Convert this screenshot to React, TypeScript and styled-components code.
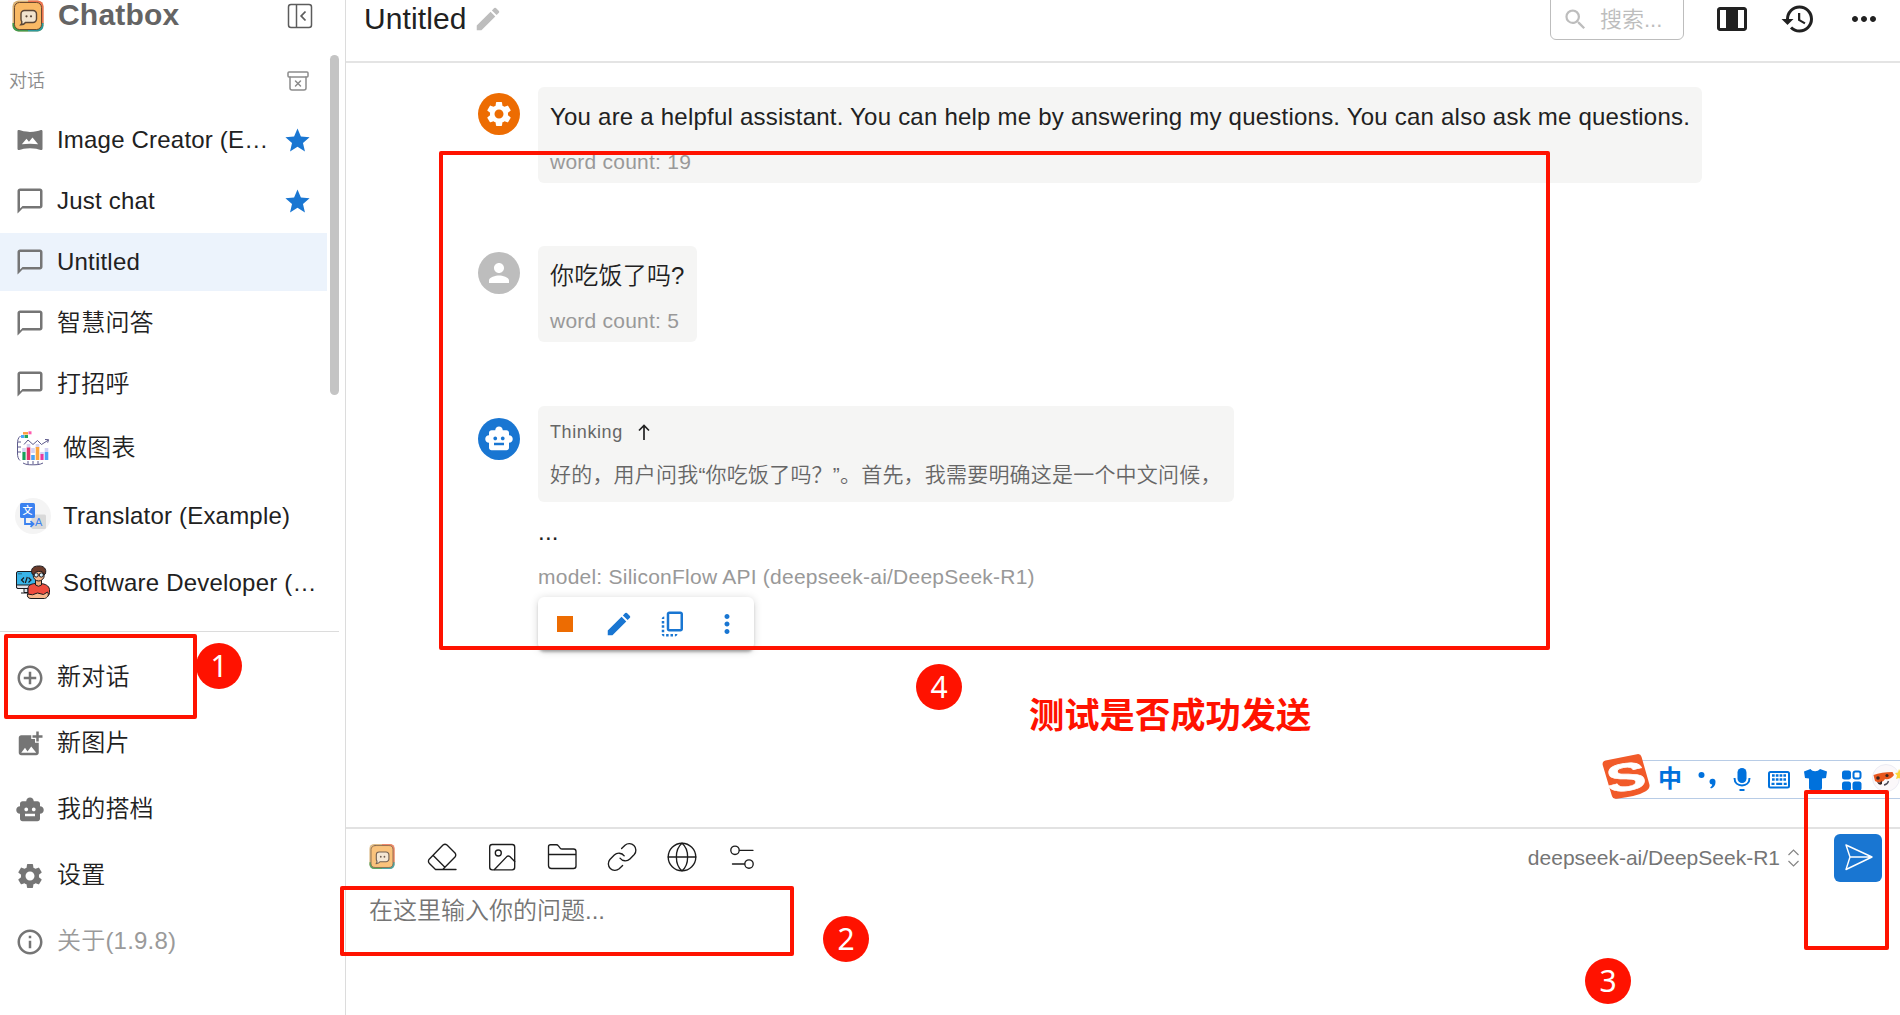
import type { ReactNode } from "react";
import styled, { createGlobalStyle } from "styled-components";
import { ArchiveX } from "lucide-react";
import {
  MdAddCircleOutline,
  MdAddPhotoAlternate,
  MdChatBubbleOutline,
  MdCopyAll,
  MdEdit,
  MdHistory,
  MdInfoOutline,
  MdMoreHoriz,
  MdMoreVert,
  MdPerson,
  MdSearch,
  MdSettings,
  MdSmartToy,
  MdStar,
  MdStop,
  MdVrpano,
} from "react-icons/md";

const GlobalStyle = createGlobalStyle`
  * {
    box-sizing: border-box;
  }

  body {
    margin: 0;
    overflow: hidden;
    background: #ffffff;
    color: #212121;
    font-family: "Liberation Sans", "Noto Sans CJK SC", sans-serif;
    font-size: 24px;
    font-weight: 350;
  }

  svg {
    display: block;
    flex-shrink: 0;
  }
`;

const Page = styled.div`
  position: relative;
  display: flex;
  width: 100vw;
  height: 100vh;
  overflow: hidden;
`;

const Sidebar = styled.aside`
  position: relative;
  display: flex;
  flex-direction: column;
  width: 346px;
  flex-shrink: 0;
  border-right: 1px solid #dcdcdc;
`;

const Brand = styled.div`
  display: flex;
  align-items: center;
  height: 56px;
  padding: 0 32px 24px 12px;
`;

const BrandName = styled.span`
  flex: 1;
  margin-left: 14px;
  margin-top: -2px;
  color: #646464;
  font-size: 30px;
  font-weight: 700;
  letter-spacing: 0.2px;
  line-height: 34px;
`;

const ListHeader = styled.div`
  display: flex;
  align-items: center;
  justify-content: space-between;
  height: 50px;
  padding: 0 35px 0 9px;
  color: #8c8c8c;
  font-size: 18px;

  span {
    margin-top: -4px;
  }
`;

const SessionList = styled.div`
  display: flex;
  flex-direction: column;
  gap: 3px;
  height: 525px;
  padding-top: 5px;
`;

const Session = styled.div<{ $active?: boolean; $avatar?: boolean }>`
  display: flex;
  align-items: center;
  width: 327px;
  height: ${({ $avatar }) => ($avatar ? 64.5 : 58)}px;
  padding: 0 ${({ $avatar }) => ($avatar ? 6 : 15)}px 0 15px;
  background: ${({ $active }) => ($active ? "#ecf3fc" : "transparent")};
  color: #757575;
`;

const SessionName = styled.span`
  flex: 1;
  min-width: 0;
  margin-left: 12px;
  overflow: hidden;
  color: #212121;
  letter-spacing: 0.2px;
  line-height: 36px;
  text-overflow: ellipsis;
  white-space: nowrap;
`;

const StarSlot = styled.span`
  margin-left: 12px;
  color: #1976d2;
`;

const ScrollThumb = styled.div`
  position: absolute;
  top: 55px;
  left: 330px;
  width: 9px;
  height: 340px;
  border-radius: 5px;
  background: #c4c4c4;
`;

const Menu = styled.nav`
  width: 339px;
  padding-top: 13px;
  border-top: 1px solid #dcdcdc;
`;

const MenuItem = styled.div<{ $muted?: boolean }>`
  display: flex;
  align-items: center;
  gap: 12px;
  height: 66px;
  padding-left: 15px;
  color: ${({ $muted }) => ($muted ? "#9a9a9a" : "#212121")};
  letter-spacing: 0.2px;

  span {
    line-height: 36px;
    margin-top: -2px;
  }

  svg {
    color: #757575;
  }
`;

const Main = styled.main`
  display: flex;
  flex: 1;
  flex-direction: column;
  min-width: 0;
`;

const Header = styled.header`
  display: flex;
  align-items: flex-start;
  height: 63px;
  padding: 0 18px 0 19px;
  border-bottom: 2px solid #e4e4e4;
`;

const Title = styled.h1`
  margin: 1px 6px 0 -1px;
  font-size: 30px;
  font-weight: 400;
  letter-spacing: 0.1px;
  line-height: 36px;
`;

const TitleEdit = styled.span`
  flex: 1;
  padding-top: 4px;
  color: #bdbdbd;
`;

const SearchBox = styled.div`
  display: flex;
  align-items: center;
  gap: 11px;
  width: 134px;
  height: 46px;
  margin-top: -6px;
  margin-right: 30px;
  padding: 5px 0 0 11px;
  border: 1px solid #bdbdbd;
  border-radius: 6px;
  color: #bdbdbd;
  font-size: 22px;
  white-space: nowrap;

  span {
    margin-top: -5px;
  }
`;

const HeaderIcons = styled.div`
  display: flex;
  gap: 30px;
  padding-top: 1px;
`;

const Conversation = styled.section`
  display: flex;
  flex: 1;
  flex-direction: column;
  align-items: flex-start;
  gap: 63px;
  padding: 24px 0 0 132px;
`;

const Message = styled.article`
  display: flex;
  gap: 18px;

  &:last-child {
    margin-top: 1px;
  }
`;

const Avatar = styled.div<{ $color: string; $offset?: number }>`
  display: flex;
  align-items: center;
  justify-content: center;
  width: 42px;
  height: 42px;
  margin-top: ${({ $offset }) => $offset ?? 6}px;
  border-radius: 50%;
  background: ${({ $color }) => $color};
  color: #ffffff;
`;

const Bubble = styled.div`
  height: 96px;
  padding: 12px 12px 6px;
  border-radius: 6px;
  background: #f5f5f4;
  white-space: nowrap;
`;

const MessageText = styled.p`
  margin: 0;
  letter-spacing: 0.225px;
  line-height: 36px;
`;

const WordCount = styled.p`
  margin: 12px 0 0;
  color: #999999;
  font-size: 21px;
  letter-spacing: 0.235px;
  line-height: 30px;
`;

const ThinkingBubble = styled(Bubble)`
  width: 696px;
  padding-top: 11px;
`;

const ThinkingTitle = styled.div`
  display: flex;
  align-items: center;
  gap: 11px;
  height: 30px;
  color: #666666;
  font-size: 18px;
  letter-spacing: 0.6px;
`;

const ThinkingText = styled.p`
  margin: 13px 0 0;
  color: #666666;
  font-size: 21px;
  letter-spacing: 0.2px;
  line-height: 30px;
`;

const ModelName = styled(WordCount)`
  margin: 12px 0 5px;
`;

const Pending = styled(MessageText)`
  margin-top: 12px;
`;

const Actions = styled.div`
  display: flex;
  width: 216px;
  height: 53px;
  border-radius: 6px;
  background: #ffffff;
  box-shadow: 0 3px 3px -1px rgba(0, 0, 0, 0.3), 0 1px 8px rgba(0, 0, 0, 0.16);
`;

const Action = styled.span<{ $color?: string }>`
  display: flex;
  align-items: center;
  justify-content: center;
  width: 54px;
  color: ${({ $color }) => $color ?? "#1976d2"};
`;

const Composer = styled.footer`
  height: 188px;
  padding: 5px 18px 0 21px;
  border-top: 2px solid #e2e2e2;
`;

const ComposerBar = styled.div`
  display: flex;
  align-items: center;
  height: 48px;
`;

const Tools = styled.div`
  display: flex;
  flex: 1;
  gap: 30px;
  padding-bottom: 3px;
  color: #1c1c1c;
`;

const ModelSelect = styled.div`
  display: flex;
  align-items: center;
  gap: 7px;
  margin-right: 34px;
  color: #757575;
  font-size: 21px;
`;

const SendButton = styled.button`
  display: flex;
  align-items: center;
  justify-content: center;
  width: 48px;
  height: 48px;
  padding: 0;
  border: 0;
  border-radius: 6px;
  background: #1976d2;
`;

const Placeholder = styled.div`
  margin-top: 11px;
  padding-left: 2px;
  color: #757575;
  font-size: 24px;
  line-height: 36px;
`;

const ImeBar = styled.div`
  position: absolute;
  top: 760px;
  left: 1615px;
  display: flex;
  align-items: center;
  width: 285px;
  height: 39px;
  padding: 0 0 2px 43px;
  border-top: 1px solid #b8cce6;
  border-bottom: 1px solid #b8cce6;
  background: #ffffff;
  color: #0071dc;
`;

const ImeLogo = styled.div`
  position: absolute;
  top: -8px;
  left: -14px;
`;

const ImeMode = styled.span`
  width: 25px;
  font-size: 24px;
  font-weight: 700;
  line-height: 36px;
`;

const Frame = styled.div<{ $x: number; $y: number; $w: number; $h: number }>`
  position: absolute;
  top: ${({ $y }) => $y}px;
  left: ${({ $x }) => $x}px;
  width: ${({ $w }) => $w}px;
  height: ${({ $h }) => $h}px;
  border: 4px solid #ff1200;
  border-radius: 2px;
`;

const Step = styled.div<{ $x: number; $y: number }>`
  position: absolute;
  top: ${({ $y }) => $y}px;
  left: ${({ $x }) => $x}px;
  display: flex;
  align-items: center;
  justify-content: center;
  width: 46px;
  height: 46px;
  border-radius: 50%;
  background: #ff1200;
  color: #ffffff;
  font-family: "Noto Sans", sans-serif;
  font-size: 30px;
  font-weight: 400;
  line-height: 46px;
`;

const Note = styled.div`
  position: absolute;
  top: 687px;
  left: 1029px;
  color: #ff1200;
  font-family: "Noto Sans CJK SC", sans-serif;
  font-size: 35.3px;
  font-weight: 700;
  line-height: 52px;
  white-space: nowrap;
`;

function AppLogo({ size, faded }: { size: number; faded?: boolean }) {
  return (
    <svg width={size} height={size} viewBox="0 0 32 32" opacity={faded ? 0.85 : 1}>
      <rect x="0.5" y="0.5" width="31" height="31" rx="6" fill="#d8b074" />
      <path d="M16 .5h9.500a6 6 0 0 1 6 6V24H16z" fill="#ec7351" />
      <path d="M.5 23H16v8.500H6.500a6 6 0 0 1-6-6z" fill="#3f9a4f" />
      <path d="M16 23h15.500v2.500a6 6 0 0 1-6 6H16z" fill="#2b9a9c" />
      <rect x="2.500" y="2.500" width="27" height="27" rx="5" fill="#f9b965" stroke="#6b4a2e" strokeWidth="1" />
      <path
        d="M12.500 10.500h8.500a3.500 3.500 0 0 1 3.500 3.500v5a3.500 3.500 0 0 1-3.500 3.500h-7.500c-1 1.500-2.500 2.300-4.700 2.300 1-1 1.200-1.800 1-3.200-.7-.8-.8-1.600-.8-2.600v-5a3.500 3.500 0 0 1 3.500-3.500z"
        fill="#f2e3cd"
        stroke="#5b4636"
        strokeWidth="1.400"
      />
      <circle cx="14.500" cy="16.300" r="1.100" fill="#5b4636" />
      <circle cx="19" cy="16.300" r="1.100" fill="#5b4636" />
    </svg>
  );
}

function CollapseIcon() {
  return (
    <svg width="26" height="26" viewBox="0 0 26 26" fill="none" stroke="#5c5c5c" strokeWidth="1.500">
      <rect x="1.500" y="1.500" width="23" height="23" rx="2.500" />
      <path d="M9.500 1.500v23" />
      <path d="M18.500 8.500 14.200 13l4.300 4.500" strokeWidth="1.800" />
    </svg>
  );
}

function ChartAvatar() {
  return (
    <svg width="36" height="36" viewBox="0 0 36 36" fill="none">
      <path d="M5.500 6C3 8 2.500 10 2.500 14v9c0 4 .8 6 2.500 7.500M3 12h3M3 17h3M3 22h3" stroke="#5d5a8c" />
      <path d="M8 33c3 1.600 5 1.800 9 1.800s8 0 11-1.800M13 31v3M18 31v3M23 31v3" stroke="#5d5a8c" />
      <path d="M9 14.500 13 10l5 4.500 4.500-4 4 4 7-4.500M30 9.500l3.500.2-.8 3" stroke="#5d5a8c" />
      <path d="M6 6.500h3" stroke="#4aa8ff" strokeWidth="3" />
      <path d="M9.500 6.500H13" stroke="#22a45d" strokeWidth="3" />
      <path d="M8 3.300h5" stroke="#ff9f40" strokeWidth="2.500" />
      <path d="M13.500 2.800h3" stroke="#ff5bae" strokeWidth="3" />
      <path d="M9 18v4M13.500 14v4M18 18v5M22.500 14v4M27 22v2.500M31.500 18v4" stroke="#d4d3f3" strokeWidth="3.600" />
      <path d="M9 22v8" stroke="#17a05a" strokeWidth="3.200" />
      <path d="M13.500 17.500V30" stroke="#e2336b" strokeWidth="3.600" />
      <path d="M18 25v5M31.500 22v8" stroke="#4ba3f5" strokeWidth="3.600" />
      <path d="M22.500 17v13" stroke="#fba53e" strokeWidth="3.600" />
      <path d="M27 24v6" stroke="#e83aa0" strokeWidth="3.200" />
    </svg>
  );
}

function TranslatorAvatar() {
  return (
    <svg width="36" height="36" viewBox="0 0 36 36">
      <circle cx="18" cy="18" r="18" fill="#f4f4f4" />
      <rect x="16.500" y="16.500" width="14.500" height="14.500" rx="1.500" fill="#d9d9d9" />
      <rect x="5" y="5" width="15" height="15" rx="1.500" fill="#3b82f0" />
      <path d="M10 20v6h8m-2.500-2.800L18.500 26l-3 2.800" fill="none" stroke="#3b82f0" strokeWidth="1.800" />
      <text x="7.500" y="16" fontSize="10" fontWeight="500" fill="#ffffff" fontFamily="Noto Sans CJK SC">文</text>
      <text x="20" y="28" fontSize="11" fontWeight="400" fill="#3b82f0" fontFamily="Liberation Sans">A</text>
    </svg>
  );
}

function DeveloperAvatar() {
  return (
    <svg width="36" height="36" viewBox="0 0 36 36" stroke="#1b1a1e" strokeWidth="1">
      <rect x="1.500" y="6.500" width="19" height="17" rx="1.500" fill="#39b4e8" />
      <path d="M1.500 20h14v3.500H3a1.500 1.500 0 0 1-1.500-1.500zM9 23.500h4v4H9zM6 28h8" fill="#dfe3ea" />
      <path d="M3.500 8.800h4" strokeDasharray="1 1" />
      <path d="M9 12.500 6.500 15 9 17.500M13.500 12.500 16 15l-2.500 2.500M12.300 12l-2 6" fill="none" strokeWidth="1.200" />
      <path d="M13 32v-8c0-4 3-5 7-5.500h6c4 .5 8 2 8.500 6v3c0 3-2 4.500-5 4.500z" fill="#ef4d3f" />
      <path d="M20.500 14.500h6V20q-3 2.500-6 0z" fill="#f2a97c" />
      <circle cx="23.700" cy="10.500" r="5.500" fill="#f7b78c" />
      <path d="M17.200 9c-2-5 1-8 6-8 5.500-.5 9 3 7 8l-1.500 1c0-3-2-4-5-3.500-3 0-4.300 1-5 3.500z" fill="#6b3b2a" />
      <circle cx="21.200" cy="10" r="2.100" fill="#d9f1fb" />
      <circle cx="26.300" cy="10" r="2.100" fill="#d9f1fb" />
      <path d="M12.500 29q5 2 10-1l6 1.500 4-2.500c2 3 0 6-3 6.500H16c-3 0-4-2-3.500-4.500z" fill="#f7b78c" />
    </svg>
  );
}

function WidthIcon() {
  return (
    <svg width="36" height="36" viewBox="0 0 24 24" fill="currentColor" fillRule="evenodd">
      <path d="M20 4H4c-1.100 0-2 .9-2 2v12c0 1.100.9 2 2 2h16c1.100 0 2-.9 2-2V6c0-1.100-.9-2-2-2zM4 18V6h4v12H4zm12 0V6h4v12h-4z" />
    </svg>
  );
}

function LineIcon({ children }: { children: ReactNode }) {
  return (
    <svg
      width="30"
      height="30"
      viewBox="0 0 30 30"
      fill="none"
      stroke="currentColor"
      strokeWidth="1.350"
      strokeLinecap="round"
      strokeLinejoin="round"
    >
      {children}
    </svg>
  );
}

function ArrowUp() {
  return (
    <svg width="20" height="20" viewBox="0 0 20 20" fill="none" stroke="#212121" strokeWidth="1.700">
      <path d="M10 18V3.500M5 8.500l5-5 5 5" />
    </svg>
  );
}

function ImeIcons() {
  return (
    <svg width="217" height="36" viewBox="0 0 217 36" fill="#0071dc">
      <circle cx="18.500" cy="14" r="3" />
      <path d="M26.500 20.500a3 3 0 1 1 6 .5c0 3-1.500 5.500-4.500 6.500l-.8-1.300c1.300-.6 2-1.500 2-2.700-1.600 0-2.700-1.300-2.700-3z" />
      <rect x="54.500" y="7" width="9" height="15" rx="4.500" />
      <path d="M51.500 17c0 5 3.500 7.500 7.500 7.500s7.500-2.500 7.500-7.500" fill="none" stroke="#0071dc" strokeWidth="2" />
      <path d="M56.500 28h5v2h-5z" />
      <rect x="86" y="11" width="20" height="15.500" rx="1.500" fill="none" stroke="#0071dc" strokeWidth="2" />
      <path d="M89 14.500h14M89 18.500h14" stroke="#0071dc" strokeWidth="2.500" strokeDasharray="2.700 1.100" />
      <path d="M88.500 22.800h3M93.200 22.800h6M100.700 22.800h3" stroke="#0071dc" strokeWidth="2.200" />
      <path d="M127.500 8c2 3 7 3 9.500 0l7 2.500-1 6.500-4 .5V27q0 2-2 2h-9q-2 0-2-2v-9.500l-4-.5-1-6.500z" />
      <rect x="159" y="9.500" width="9" height="9" rx="2.500" />
      <rect x="170.500" y="10.500" width="7" height="7" rx="2" fill="none" stroke="#0071dc" strokeWidth="2" />
      <rect x="159" y="20.500" width="9" height="9" rx="2.500" />
      <rect x="169.500" y="20.500" width="9" height="9" rx="2.500" />
      <circle cx="203" cy="17" r="13.500" fill="#fbf8fa" stroke="#ececf4" />
      <path d="M190.500 14c5-2 12-3 19-3l1.500 3c-3 4-6 5-9 4-2 4-7 4-10 2z" fill="#e8571f" />
      <circle cx="195" cy="17" r="1.800" fill="#3b2420" />
      <circle cx="204" cy="14.500" r="1.600" fill="#3b2420" />
      <path d="M194 21c3 1 4 0 5-1.500v3.500q-3 2-5-2z" fill="#3b2420" />
      <path d="M201 24c3-.5 4-2 4.500-4" fill="none" stroke="#4a4a55" strokeWidth="1.300" />
      <path d="m216 8 2 4 3 .5-2 2.500 1 4-4-2-3 1 1-3.500-2-2.500 3-.5z" fill="#fbd53a" />
    </svg>
  );
}

function SogouLogo() {
  return (
    <svg width="52" height="48" viewBox="0 0 52 48">
      <path d="M4.500 7.500 36 1.200q3.500-.7 4.500 2.500l7.700 27q1.500 5-3.500 7.500-8 5-29 7.500-4 .4-5-3.500L1.700 12Q1 8.500 4.500 7.500z" fill="#f15a29" />
      <text
        x="26"
        y="38"
        textAnchor="middle"
        fontFamily="Liberation Sans"
        fontSize="38"
        fontWeight="700"
        fill="#ffffff"
        stroke="#ffffff"
        strokeWidth="0.600"
        transform="translate(25.500 23.500) rotate(-8) scale(1.580 1.020) translate(-26.300 -24.500)"
      >
        S
      </text>
    </svg>
  );
}

const sessions = [
  { name: "Image Creator (Example)", icon: <MdVrpano size={30} />, starred: true },
  { name: "Just chat", icon: <MdChatBubbleOutline size={30} />, starred: true },
  { name: "Untitled", icon: <MdChatBubbleOutline size={30} />, active: true },
  { name: "智慧问答", icon: <MdChatBubbleOutline size={30} /> },
  { name: "打招呼", icon: <MdChatBubbleOutline size={30} /> },
  { name: "做图表", icon: <ChartAvatar />, avatar: true },
  { name: "Translator (Example)", icon: <TranslatorAvatar />, avatar: true },
  { name: "Software Developer (Example)", icon: <DeveloperAvatar />, avatar: true },
];

const menu = [
  { label: "新对话", icon: <MdAddCircleOutline size={30} /> },
  { label: "新图片", icon: <MdAddPhotoAlternate size={30} /> },
  { label: "我的搭档", icon: <MdSmartToy size={30} /> },
  { label: "设置", icon: <MdSettings size={30} /> },
  { label: "关于(1.9.8)", icon: <MdInfoOutline size={30} />, muted: true },
];

export default function App() {
  return (
    <>
      <GlobalStyle />
      <Page>
        <Sidebar>
          <Brand>
            <AppLogo size={32} />
            <BrandName>Chatbox</BrandName>
            <CollapseIcon />
          </Brand>
          <ListHeader>
            <span>对话</span>
            <ArchiveX size={24} strokeWidth={1.5} />
          </ListHeader>
          <SessionList>
            {sessions.map((s) => (
              <Session key={s.name} $active={s.active} $avatar={s.avatar}>
                {s.icon}
                <SessionName>{s.name}</SessionName>
                {s.starred && (
                  <StarSlot>
                    <MdStar size={29} />
                  </StarSlot>
                )}
              </Session>
            ))}
          </SessionList>
          <Menu>
            {menu.map((m) => (
              <MenuItem key={m.label} $muted={m.muted}>
                {m.icon}
                <span>{m.label}</span>
              </MenuItem>
            ))}
          </Menu>
          <ScrollThumb />
        </Sidebar>

        <Main>
          <Header>
            <Title>Untitled</Title>
            <TitleEdit>
              <MdEdit size={30} />
            </TitleEdit>
            <SearchBox>
              <MdSearch size={27} />
              <span>搜索...</span>
            </SearchBox>
            <HeaderIcons>
              <WidthIcon />
              <MdHistory size={36} />
              <MdMoreHoriz size={36} />
            </HeaderIcons>
          </Header>

          <Conversation>
            <Message>
              <Avatar $color="#ed6c02">
                <MdSettings size={30} />
              </Avatar>
              <Bubble>
                <MessageText>
                  You are a helpful assistant. You can help me by answering my questions. You can also ask me questions.
                </MessageText>
                <WordCount>word count: 19</WordCount>
              </Bubble>
            </Message>
            <Message>
              <Avatar $color="#bdbdbd">
                <MdPerson size={30} />
              </Avatar>
              <Bubble>
                <MessageText>你吃饭了吗?</MessageText>
                <WordCount>word count: 5</WordCount>
              </Bubble>
            </Message>
            <Message>
              <Avatar $color="#1976d2" $offset={12}>
                <MdSmartToy size={30} />
              </Avatar>
              <div>
                <ThinkingBubble>
                  <ThinkingTitle>
                    <span>Thinking</span>
                    <ArrowUp />
                  </ThinkingTitle>
                  <ThinkingText>好的，用户问我“你吃饭了吗？”。首先，我需要明确这是一个中文问候，</ThinkingText>
                </ThinkingBubble>
                <Pending>...</Pending>
                <ModelName>model: SiliconFlow API (deepseek-ai/DeepSeek-R1)</ModelName>
                <Actions>
                  <Action $color="#ed6c02">
                    <MdStop size={32} />
                  </Action>
                  <Action>
                    <MdEdit size={30} />
                  </Action>
                  <Action>
                    <MdCopyAll size={30} />
                  </Action>
                  <Action>
                    <MdMoreVert size={30} />
                  </Action>
                </Actions>
              </div>
            </Message>
          </Conversation>

          <Composer>
            <ComposerBar>
              <Tools>
                <LineIcon>
                  <svg x="2" y="1.500" width="26" height="27" stroke="none">
                    <AppLogo size={26} faded />
                  </svg>
                </LineIcon>
                <LineIcon>
                  <path d="M8.500 27.500 2.200 21.200q-1.500-2 0-4L16 3q2-1.600 4 0l8 8q1.500 2 0 4L15.700 27.500M8.500 27.500h20.500M6.200 13.500l11.700 11.700" />
                </LineIcon>
                <LineIcon>
                  <rect x="2.700" y="2.500" width="25" height="25.300" rx="2.500" />
                  <circle cx="11.300" cy="11" r="3" />
                  <path d="M27.700 19.500 22.800 14.600q-1.500-1.300-3 0L7.500 27.500" />
                </LineIcon>
                <LineIcon>
                  <path d="M1.500 23.500V4.700Q1.500 2.700 3.500 2.700h6q1 0 1.700 1l2 2.500q.7.800 2 .8H26.500q2.500 0 2.500 2.500v14.500q0 2.500-2.500 2.500h-22Q1.500 26.500 1.500 23.500zM1.500 12.500h27.500" />
                </LineIcon>
                <LineIcon>
                  <path d="M14.2 6.800 17.600 3.500a6.600 6.600 0 0 1 9.300 9.300l-4.400 4.400a6.600 6.600 0 0 1-9.900-.7" transform="translate(.4 -.3)" />
                  <path d="M15.800 23.200 12.400 26.500a6.600 6.600 0 0 1-9.300-9.300l4.400-4.400a6.600 6.600 0 0 1 9.900.7" transform="translate(-.2 .3)" />
                </LineIcon>
                <LineIcon>
                  <circle cx="15" cy="15" r="13.800" />
                  <path d="M1.200 15h27.600M15 1.200c-7.500 6-7.500 21.600 0 27.600M15 1.200c7.500 6 7.500 21.600 0 27.600" />
                </LineIcon>
                <LineIcon>
                  <circle cx="8" cy="8.300" r="4.200" />
                  <path d="M12.500 8.300h13.500M5.500 22h12" />
                  <circle cx="22" cy="22" r="4.200" />
                </LineIcon>
              </Tools>
              <ModelSelect>
                <span>deepseek-ai/DeepSeek-R1</span>
                <svg width="13" height="20" viewBox="0 0 13 20" fill="none" stroke="#858585" strokeWidth="1.200">
                  <path d="m1.500 7 5-5 5 5M1.500 13l5 5 5-5" />
                </svg>
              </ModelSelect>
              <SendButton aria-label="send">
                <svg width="30" height="30" viewBox="0 0 30 30" fill="none" stroke="#ffffff" strokeWidth="1.400" strokeLinejoin="round">
                  <path d="M3 2 29 14 3 26.500 7 14zM7 14h22" />
                </svg>
              </SendButton>
            </ComposerBar>
            <Placeholder>在这里输入你的问题...</Placeholder>
          </Composer>
        </Main>

        <ImeBar>
          <ImeLogo>
            <SogouLogo />
          </ImeLogo>
          <ImeMode>中</ImeMode>
          <ImeIcons />
        </ImeBar>

        <Frame $x={4} $y={634} $w={193} $h={85} />
        <Frame $x={340} $y={886} $w={454} $h={70} />
        <Frame $x={1804} $y={790} $w={85} $h={160} />
        <Frame $x={439} $y={151} $w={1111} $h={499} />
        <Step $x={196} $y={643}>1</Step>
        <Step $x={823} $y={916}>2</Step>
        <Step $x={1585} $y={958}>3</Step>
        <Step $x={916} $y={664}>4</Step>
        <Note>测试是否成功发送</Note>
      </Page>
    </>
  );
}
